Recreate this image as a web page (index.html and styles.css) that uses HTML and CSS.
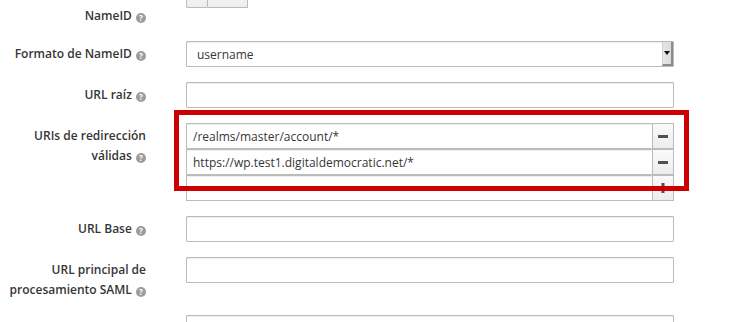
FILE: index.html
```html
<!DOCTYPE html>
<html lang="es">
<head>
  <meta charset="UTF-8">
  <title>Configuración SAML</title>
  <link rel="stylesheet" href="styles.css">
</head>
<body>
  <form class="form">
    <div class="form-group">
      <label class="label">Forzar formato<br>NameID <span class="help">?</span></label>
      <div class="switch">
        <span class="switch-on"></span>
        <span class="switch-off"></span>
      </div>
    </div>

    <div class="form-group">
      <label class="label">Formato de NameID <span class="help">?</span></label>
      <div class="select">
        <span class="select-value">username</span>
        <span class="select-arrow"></span>
      </div>
    </div>

    <div class="form-group">
      <label class="label">URL raíz <span class="help">?</span></label>
      <input class="input" type="text">
    </div>

    <div class="form-group">
      <label class="label">URIs de redirección<br>válidas <span class="help">?</span></label>
      <div class="multi">
        <div class="multi-row">
          <input class="input" type="text" value="/realms/master/account/*">
          <button class="btn" type="button"><svg width="10" height="3" viewBox="0 0 10 3"><rect width="10" height="3" fill="#4d5258"/></svg></button>
        </div>
        <div class="multi-row">
          <input class="input" type="text" value="https://wp.test1.digitaldemocratic.net/*">
          <button class="btn" type="button"><svg width="10" height="3" viewBox="0 0 10 3"><rect width="10" height="3" fill="#4d5258"/></svg></button>
        </div>
        <div class="multi-row">
          <input class="input" type="text">
          <button class="btn" type="button"><svg width="10" height="10" viewBox="0 0 10 10"><rect y="3.5" width="10" height="3" fill="#4d5258"/><rect x="3.5" width="3" height="10" fill="#4d5258"/></svg></button>
        </div>
        <!-- highlight drawn over the field -->
        <div class="highlight"></div>
      </div>
    </div>

    <div class="form-group">
      <label class="label">URL Base <span class="help">?</span></label>
      <input class="input" type="text">
    </div>

    <div class="form-group">
      <label class="label">URL principal de<br>procesamiento SAML <span class="help">?</span></label>
      <input class="input" type="text">
    </div>

    <div class="form-group">
      <label class="label"></label>
      <input class="input" type="text">
    </div>
  </form>
</body>
</html>
```

FILE: styles.css
```css
body {
  margin: 0;
  background: #fff;
  font-family: "Open Sans", "Liberation Sans", sans-serif;
  font-size: 12px;
  color: #363636;
  overflow: hidden;
}
.form {
  margin-top: -17px;
}
.form-group {
  display: grid;
  grid-template-columns: 146px 488px;
  column-gap: 40px;
  align-items: start;
  margin-bottom: 15px;
}
.label {
  text-align: right;
  font-weight: 600;
  line-height: 20px;
  padding-top: 3px;
  white-space: nowrap;
}
.help {
  display: inline-block;
  width: 10px;
  height: 10px;
  border-radius: 50%;
  background: #9c9c9c;
  color: #fff;
  font-size: 8px;
  font-weight: 700;
  line-height: 10px;
  text-align: center;
  vertical-align: -1px;
  margin-left: 1px;
}
.input {
  box-sizing: border-box;
  width: 100%;
  height: 26px;
  margin: 0;
  padding: 0 6px;
  border: 1px solid #bbb;
  border-radius: 1px;
  box-shadow: inset 0 1px 1px rgba(3, 3, 3, 0.075);
  font-family: inherit;
  font-size: 12px;
  color: #363636;
  background: #fff;
  outline: none;
}
.switch {
  display: flex;
  width: 62px;
  height: 25px;
}
.switch span {
  box-sizing: border-box;
  border: 1px solid #bbb;
  background: linear-gradient(#fafafa, #ededed);
}
.switch-on {
  width: 22px;
  border-radius: 1px 0 0 1px;
}
.switch-off {
  width: 40px;
  border-left: none !important;
  border-radius: 0 1px 1px 0;
}
.select {
  box-sizing: border-box;
  display: flex;
  align-items: center;
  height: 26px;
  border: 1px solid #bbb;
  border-radius: 1px;
  box-shadow: inset 0 1px 1px rgba(3, 3, 3, 0.075);
  padding-left: 10px;
}
.select-value {
  flex: 1;
}
.select-arrow {
  position: relative;
  box-sizing: border-box;
  width: 11px;
  height: 24px;
  background: linear-gradient(90deg, #e6e6e6, #dcdcdc);
  border-right: 2px solid #8c8c8c;
  border-bottom: 2px solid #8c8c8c;
  border-left: 1px solid #d0d0d0;
}
.select-arrow::after {
  content: "";
  position: absolute;
  left: 1px;
  top: 9px;
  border-left: 3.5px solid transparent;
  border-right: 3.5px solid transparent;
  border-top: 4px solid #111;
}
.multi {
  position: relative;
}
.multi-row {
  display: flex;
}
.multi-row .input {
  flex: 1;
  border-right: none;
}
.btn {
  box-sizing: border-box;
  width: 22px;
  height: 26px;
  padding: 0;
  border: 1px solid #bbb;
  background: linear-gradient(#fafafa, #ededed);
  display: flex;
  align-items: center;
  justify-content: center;
}
.highlight {
  position: absolute;
  left: -12px;
  top: -13px;
  width: 515px;
  height: 81px;
  box-sizing: border-box;
  border: 5px solid #cc0000;
  pointer-events: none;
}
```
